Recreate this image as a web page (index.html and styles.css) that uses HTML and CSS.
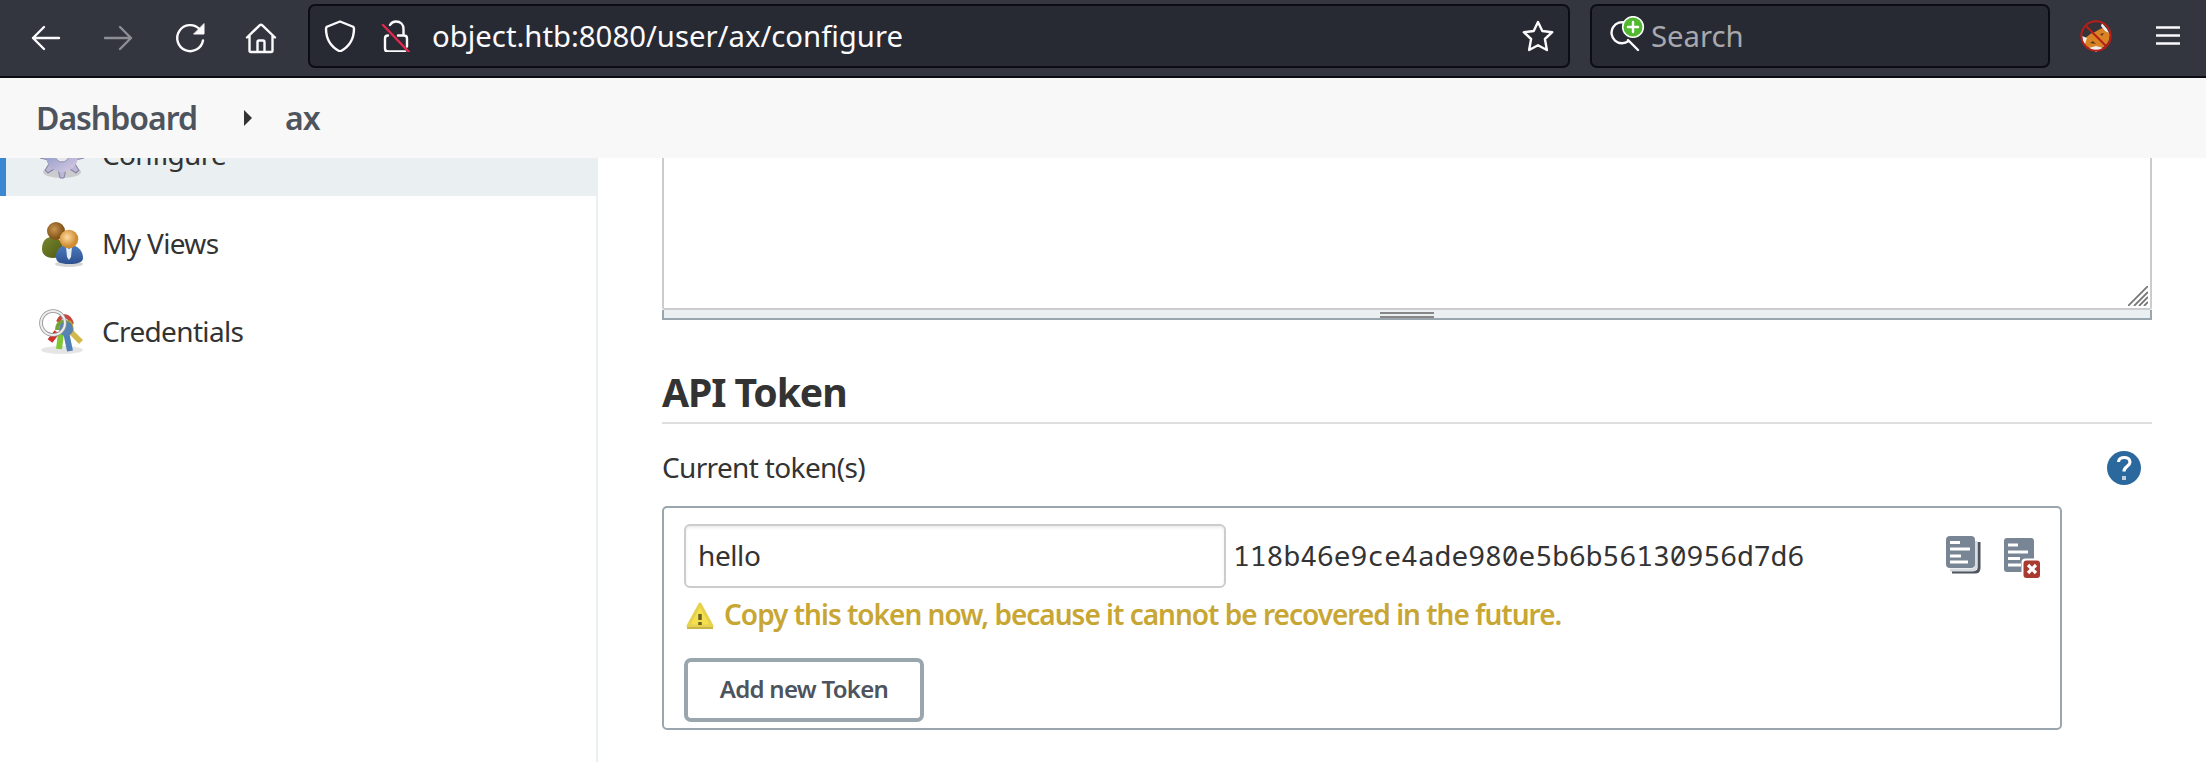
FILE: index.html
```html
<!DOCTYPE html>
<html lang="en">
<head>
<meta charset="utf-8">
<title>ax - Configure</title>
<link rel="stylesheet" href="styles.css">
</head>
<body>
<header class="toolbar">
  <svg class="tool back" viewBox="0 0 32 32"><path d="M29 16H3M14 5 3 16l11 11"/></svg>
  <svg class="tool forward" viewBox="0 0 32 32"><path d="M3 16h26M18 5l11 11-11 11"/></svg>
  <svg class="tool reload" viewBox="0 0 32 32"><path d="M29 18.500A13 13 0 1 1 25.500 7"/><path class="solid" d="M30 2v10H20z"/></svg>
  <svg class="tool home" viewBox="0 0 32 32"><path d="M2 15.500 14.600 3.300q1.400-1.300 2.800 0L30 15.500M4.500 14v14.500q0 1.500 1.500 1.500h20q1.500 0 1.500-1.500V14M12.500 30V20q0-1.500 1.500-1.500h4q1.500 0 1.500 1.500v10"/></svg>
  <div class="field address">
    <svg class="tool shield" viewBox="0 0 32 32"><path d="M16 1.500 28.500 6.500q1.500.500 1.500 2C30 20 25 27 16 31.500 7 27 2 20 2 8.500q0-1.500 1.500-2z"/></svg>
    <svg class="tool lock" viewBox="0 0 32 32"><path d="M10 5c1.500-2.500 3.500-3.500 6-3.500 4.500 0 7.500 3 7.500 7.500v6M8 15.500q-3 0-3 3v10q0 3 3 3h17M18 15.500h6q3 0 3 3v8"/><path class="strike" d="m3 5 26 27"/></svg>
    <span class="url">object.htb:8080/user/ax/configure</span>
    <svg class="tool star" viewBox="0 0 32 32"><path d="m16 2 4.300 9 9.900 1.200-7.300 6.800 2 11L16 25.200 7.100 30l2-11-7.300-6.800 9.900-1.200z"/></svg>
  </div>
  <div class="field search">
    <svg class="lens" viewBox="0 0 36 36"><path d="M16 7A10.500 10.500 0 1 0 18.500 25M18 24l10 10"/><circle class="badge" cx="23" cy="11" r="10.300"/><path class="plus" d="M23 6v10M18 11h10"/></svg>
    <span class="placeholder">Search</span>
  </div>
  <svg class="fox" viewBox="0 0 32 32"><circle cx="16" cy="16" r="14" fill="#35323a"/><path d="M3 18c3 1 5-3 9-5 4-1 7-4 11-5l7 6-1 6c-2 5-6 9-13 9S4 26 3 18z" fill="#d98325"/><path d="m22 3 5 6 2 4-4-2-4-5zM2 16l5 2-2 6-2-3zM9 28l7-2 7 2-7 4z" fill="#eee"/><path d="m10 23 3-2 3 3zM20 14l4-1-2 3z" fill="#5b3d1d"/><circle cx="16" cy="16" r="14.700" fill="none" stroke="#b51e19" stroke-width="2"/><path d="m6 6 20 20" stroke="#b51e19" stroke-width="2"/></svg>
  <svg class="menu" viewBox="0 0 24 20"><path d="M0 1.500h24M0 9.500h24M0 17.500h24"/></svg>
</header>
<nav class="breadcrumbs"><a class="crumb-home">Dashboard</a><i class="crumb-arrow"></i><a class="crumb-user">ax</a></nav>
<div class="page">
  <aside class="side">
    <a class="task active"><svg class="task-icon" viewBox="0 0 48 48"><defs><linearGradient id="gear" x2=".6" y2="1"><stop offset=".3" stop-color="#8f9bc8"/><stop offset="1" stop-color="#cdc3df"/></linearGradient></defs><ellipse cx="24" cy="40" rx="19" ry="6" fill="#aaa" opacity=".5"/><g fill="#bbb5d6" stroke="#8582a2" stroke-linejoin="round"><path id="teeth" d="m17 24 5-22h4l5 22-5 22h-4z"/><path d="m17 24 5-22h4l5 22-5 22h-4z" transform="rotate(45 24 24)"/><path d="m17 24 5-22h4l5 22-5 22h-4z" transform="rotate(90 24 24)"/><path d="m17 24 5-22h4l5 22-5 22h-4z" transform="rotate(135 24 24)"/></g><circle cx="24" cy="24" r="16" fill="url(#gear)"/><circle cx="24" cy="23" r="7" fill="#e5e8ed" stroke="#9492b0"/></svg><span>Configure</span></a>
    <a class="task"><svg class="task-icon" viewBox="0 0 48 48"><defs><radialGradient id="b" cx=".4" cy=".4"><stop stop-color="#ca9550"/><stop offset="1" stop-color="#855619"/></radialGradient><radialGradient id="o" cx=".4" cy=".4"><stop stop-color="#ffdca1"/><stop offset="1" stop-color="#d08c32"/></radialGradient><linearGradient id="g" x2="1" y2="1"><stop stop-color="#78852e"/><stop offset="1" stop-color="#4e5b12"/></linearGradient><linearGradient id="bl" x2="0" y2="1"><stop stop-color="#4c7cbe"/><stop offset="1" stop-color="#2c508f"/></linearGradient></defs><ellipse cx="31" cy="44" rx="14" ry="3" fill="#aaa" opacity=".5"/><path d="M4 29c0-8 4-12 10-12s11 5 11 12c0 6-4 9-10 9S4 35 4 29z" fill="url(#g)"/><circle cx="18" cy="11" r="9" fill="url(#b)"/><path d="M18 37c0-7 4-12 13-12s14 6 14 13c0 4-5 6-14 6s-13-2-13-7z" fill="url(#bl)"/><path d="m28 27 3 2 3-2-1 10-2 3-2-3z" fill="#e4ecf6"/><circle cx="31" cy="19" r="9.300" fill="url(#o)"/></svg><span>My Views</span></a>
    <a class="task"><svg class="task-icon" viewBox="0 0 48 48"><ellipse cx="24" cy="42" rx="21" ry="4" fill="#ccc" opacity=".5"/><path d="M20 14c3-8 11-8 14 2" fill="none" stroke="#c7453c" stroke-width="4"/><path d="m19 24-7 9" stroke="#cf3029" stroke-width="6"/><path d="m32 23 11 11" stroke="#d2b84d" stroke-width="5.500"/><path d="M31 13q4 4 3 11" fill="none" stroke="#c8a23a" stroke-width="3"/><path d="M23 25 21 41" stroke="#7fc735" stroke-width="6"/><path d="M19 22c0-9 9-11 14-4" fill="none" stroke="#75a13d" stroke-width="4"/><path d="m28 24 4 19" stroke="#4f7fb9" stroke-width="6"/><circle cx="28" cy="21" r="7" fill="#5583b5"/><circle cx="15" cy="15" r="12" fill="none" stroke="#949494" stroke-width="3.600"/><circle cx="15" cy="15" r="12" fill="none" stroke="#eee" stroke-width="2"/></svg><span>Credentials</span></a>
  </aside>
  <main class="main">
    <div class="textarea"><svg class="grip" viewBox="0 0 20 20"><path d="M0 20 20 0M6 20 20 6M11 20l9-9M16 20l4-4"/></svg></div>
    <div class="resize-bar"><i class="handle"></i></div>
    <h2 class="section-title">API Token</h2>
    <div class="label-row"><span class="label">Current token(s)</span><svg class="help" viewBox="0 0 34 34"><circle cx="17" cy="17" r="17" fill="#2b689e"/><path d="M11.500 11c0-6 11.500-6 11.500 0 0 4.500-6 4-6 9.500" fill="none" stroke="#fff" stroke-width="3.200"/><path d="M15 25h4v4h-4z" fill="#bcd0e2"/></svg></div>
    <section class="tokens">
      <div class="token-row">
        <div class="token-name">hello</div>
        <span class="token-value">118b46e9ce4ade980e5b6b56130956d7d6</span>
        <svg class="copy" viewBox="0 0 36 38"><path d="M33 6v26q0 4-4 4H6" fill="none" stroke="#4d545d" stroke-width="3"/><path d="M30 5v25q0 4-4 4H4" fill="none" stroke="#d7dce2" stroke-width="3"/><rect width="29" height="32" rx="4" fill="#788594"/><path d="M4 6.500h10M4 13h20M4 20h11M4 26h18" stroke="#fff" stroke-width="3"/></svg>
        <svg class="revoke" viewBox="0 0 36 40"><rect width="30" height="34" rx="3" fill="#788594"/><path d="M4 7h10M4 14h20M4 20.500h12M4 27h13" stroke="#fff" stroke-width="3"/><rect x="17.500" y="20.500" width="20" height="21" rx="4" fill="#fff"/><rect x="19.500" y="22.500" width="16.500" height="17.500" rx="3" fill="#a93a2f"/><path d="m24 27 8 8m0-8-8 8" stroke="#fff" stroke-width="3.200"/></svg>
      </div>
      <div class="warning"><svg class="warn-icon" viewBox="0 0 28 28"><path d="M14 2 26 24H2z" fill="#f3e04c" stroke="#e6d14e" stroke-width="3" stroke-linejoin="round"/><path d="M1 26h26" stroke="#cbb548" stroke-width="2"/><path d="M14 12v6M14 20v3" stroke="#6b6128" stroke-width="3.500"/></svg><span class="warn-text">Copy this token now, because it cannot be recovered in the future.</span></div>
      <button class="add">Add new Token</button>
    </section>
  </main>
</div>
</body>
</html>
```
FILE: styles.css
```css
* { box-sizing: border-box; }
body { margin: 0; width: 2206px; height: 762px; overflow: hidden; background: #fff; color: #333; font: 28px/40px "Noto Sans", sans-serif; }
svg { display: block; flex: none; }
span, a { white-space: nowrap; }

.toolbar { display: flex; align-items: flex-start; height: 78px; padding: 4px 26px 0 30px; background: #33363e; border-bottom: 2px solid #0c0d12; }
.tool { width: 32px; height: 32px; fill: none; stroke: #fbfbfe; stroke-width: 2.4; stroke-linecap: round; stroke-linejoin: round; }
.toolbar > .tool { margin-top: 18px; }
.forward { margin-left: 40px; opacity: .45; }
.reload { margin-left: 40px; }
.reload .solid { fill: #fbfbfe; stroke-width: 1; }
.home { margin-left: 39px; }
.field { display: flex; height: 64px; background: #282a33; border: 2px solid #0c0d12; border-radius: 7px; line-height: 61px; font-size: 29.3px; }
.address { width: 1262px; margin-left: 31px; padding: 0 14px; }
.address .tool { margin-top: 14px; }
.lock { margin-left: 24px; }
.lock .strike { stroke: #e22850; }
.url { flex: 1; margin-left: 20px; color: #fbfbfe; }
.search { width: 460px; margin-left: 20px; padding-left: 18px; }
.lens { width: 36px; height: 36px; margin-top: 10px; fill: none; stroke: #fbfbfe; stroke-width: 2.4; stroke-linecap: round; }
.lens .badge { fill: #50b92f; stroke: #fff; stroke-width: 1.6; }
.lens .plus { stroke: #fff; }
.placeholder { margin-left: 5px; color: #a8a9ae; }
.fox { width: 32px; height: 32px; margin: 16px 0 0 30px; }
.menu { width: 24px; height: 20px; margin: 22px 0 0 44px; stroke: #fbfbfe; stroke-width: 2.6; }

.breadcrumbs { display: flex; align-items: center; height: 80px; padding-left: 36px; background: #f8f8f8; color: #4d545d; font-size: 32px; font-weight: 600; letter-spacing: -1.02px; }
.crumb-home { width: 208px; }
.crumb-arrow { width: 0; height: 0; border: 8px solid transparent; border-left-color: #333; border-right: 0; }
.crumb-user { margin-left: 33px; }

.page { display: flex; height: 604px; overflow: hidden; letter-spacing: -.65px; }
.side { width: 598px; border-right: 2px solid #eaeff2; }
.task { display: flex; align-items: center; height: 80px; margin-bottom: 8px; padding-left: 38px; }
.task span { padding-bottom: 2px; }
.task.active { width: 598px; margin-top: -42px; padding-left: 32px; background: #eaeff2; border-left: 6px solid #3b87d1; }
.task.active span { padding-bottom: 5px; }
.task-icon { width: 48px; height: 48px; margin-right: 16px; }

.main { width: 1490px; margin-left: 64px; }
.textarea { display: flex; align-items: flex-end; justify-content: flex-end; height: 152px; padding: 2px; border: 2px solid #ccc; border-top: 0; border-bottom-right-radius: 3px; border-bottom-left-radius: 3px; }
.grip { width: 20px; height: 20px; fill: none; stroke: #777; stroke-width: 1.8; }
.resize-bar { display: flex; justify-content: center; height: 10px; padding-top: 2px; background: #eaeff2; border: 2px solid #9aa6ae; border-top: 0; }
.handle { width: 54px; height: 6px; border: solid #878787; border-width: 2px 0; }
.section-title { height: 104px; margin: 0; padding-top: 45px; border-bottom: 2px solid #dedede; font-size: 39.2px; line-height: 54px; font-weight: 700; letter-spacing: -1.1px; }
.label-row { display: flex; justify-content: space-between; padding: 23px 11px 0 0; height: 82px; }
.help { width: 34px; height: 34px; margin-top: 4px; }
.tokens { width: 1400px; height: 224px; padding: 16px 20px; border: 2px solid #9aa6ae; border-radius: 5px; }
.token-row { display: flex; height: 64px; line-height: 60px; }
.token-name { width: 542px; padding-left: 12px; line-height: 58px; letter-spacing: -.4px; border: 2px solid #ccc; border-radius: 6px; box-shadow: inset 0 2px 3px #eee; }
.token-value { width: 711px; padding: 1px 0 0 7px; font-family: "Noto Sans Mono", "DejaVu Sans Mono", monospace; letter-spacing: 0; }
.copy { width: 36px; height: 38px; margin-top: 12px; margin-left: 9px; }
.revoke { width: 36px; height: 40px; margin-top: 14px; margin-left: 22px; }
.warning { display: flex; height: 70px; padding-top: 6px; color: #c8a634; font-weight: 600; letter-spacing: -1px; }
.warn-icon { width: 28px; height: 28px; margin: 8px 10px 0 2px; }
.add { display: block; width: 240px; height: 64px; padding: 0 0 3px; background: #fff; border: 4px solid #9aa6ae; border-radius: 7px; color: #4d545d; font: 600 24px "Noto Sans", sans-serif; letter-spacing: -.72px; }
```
